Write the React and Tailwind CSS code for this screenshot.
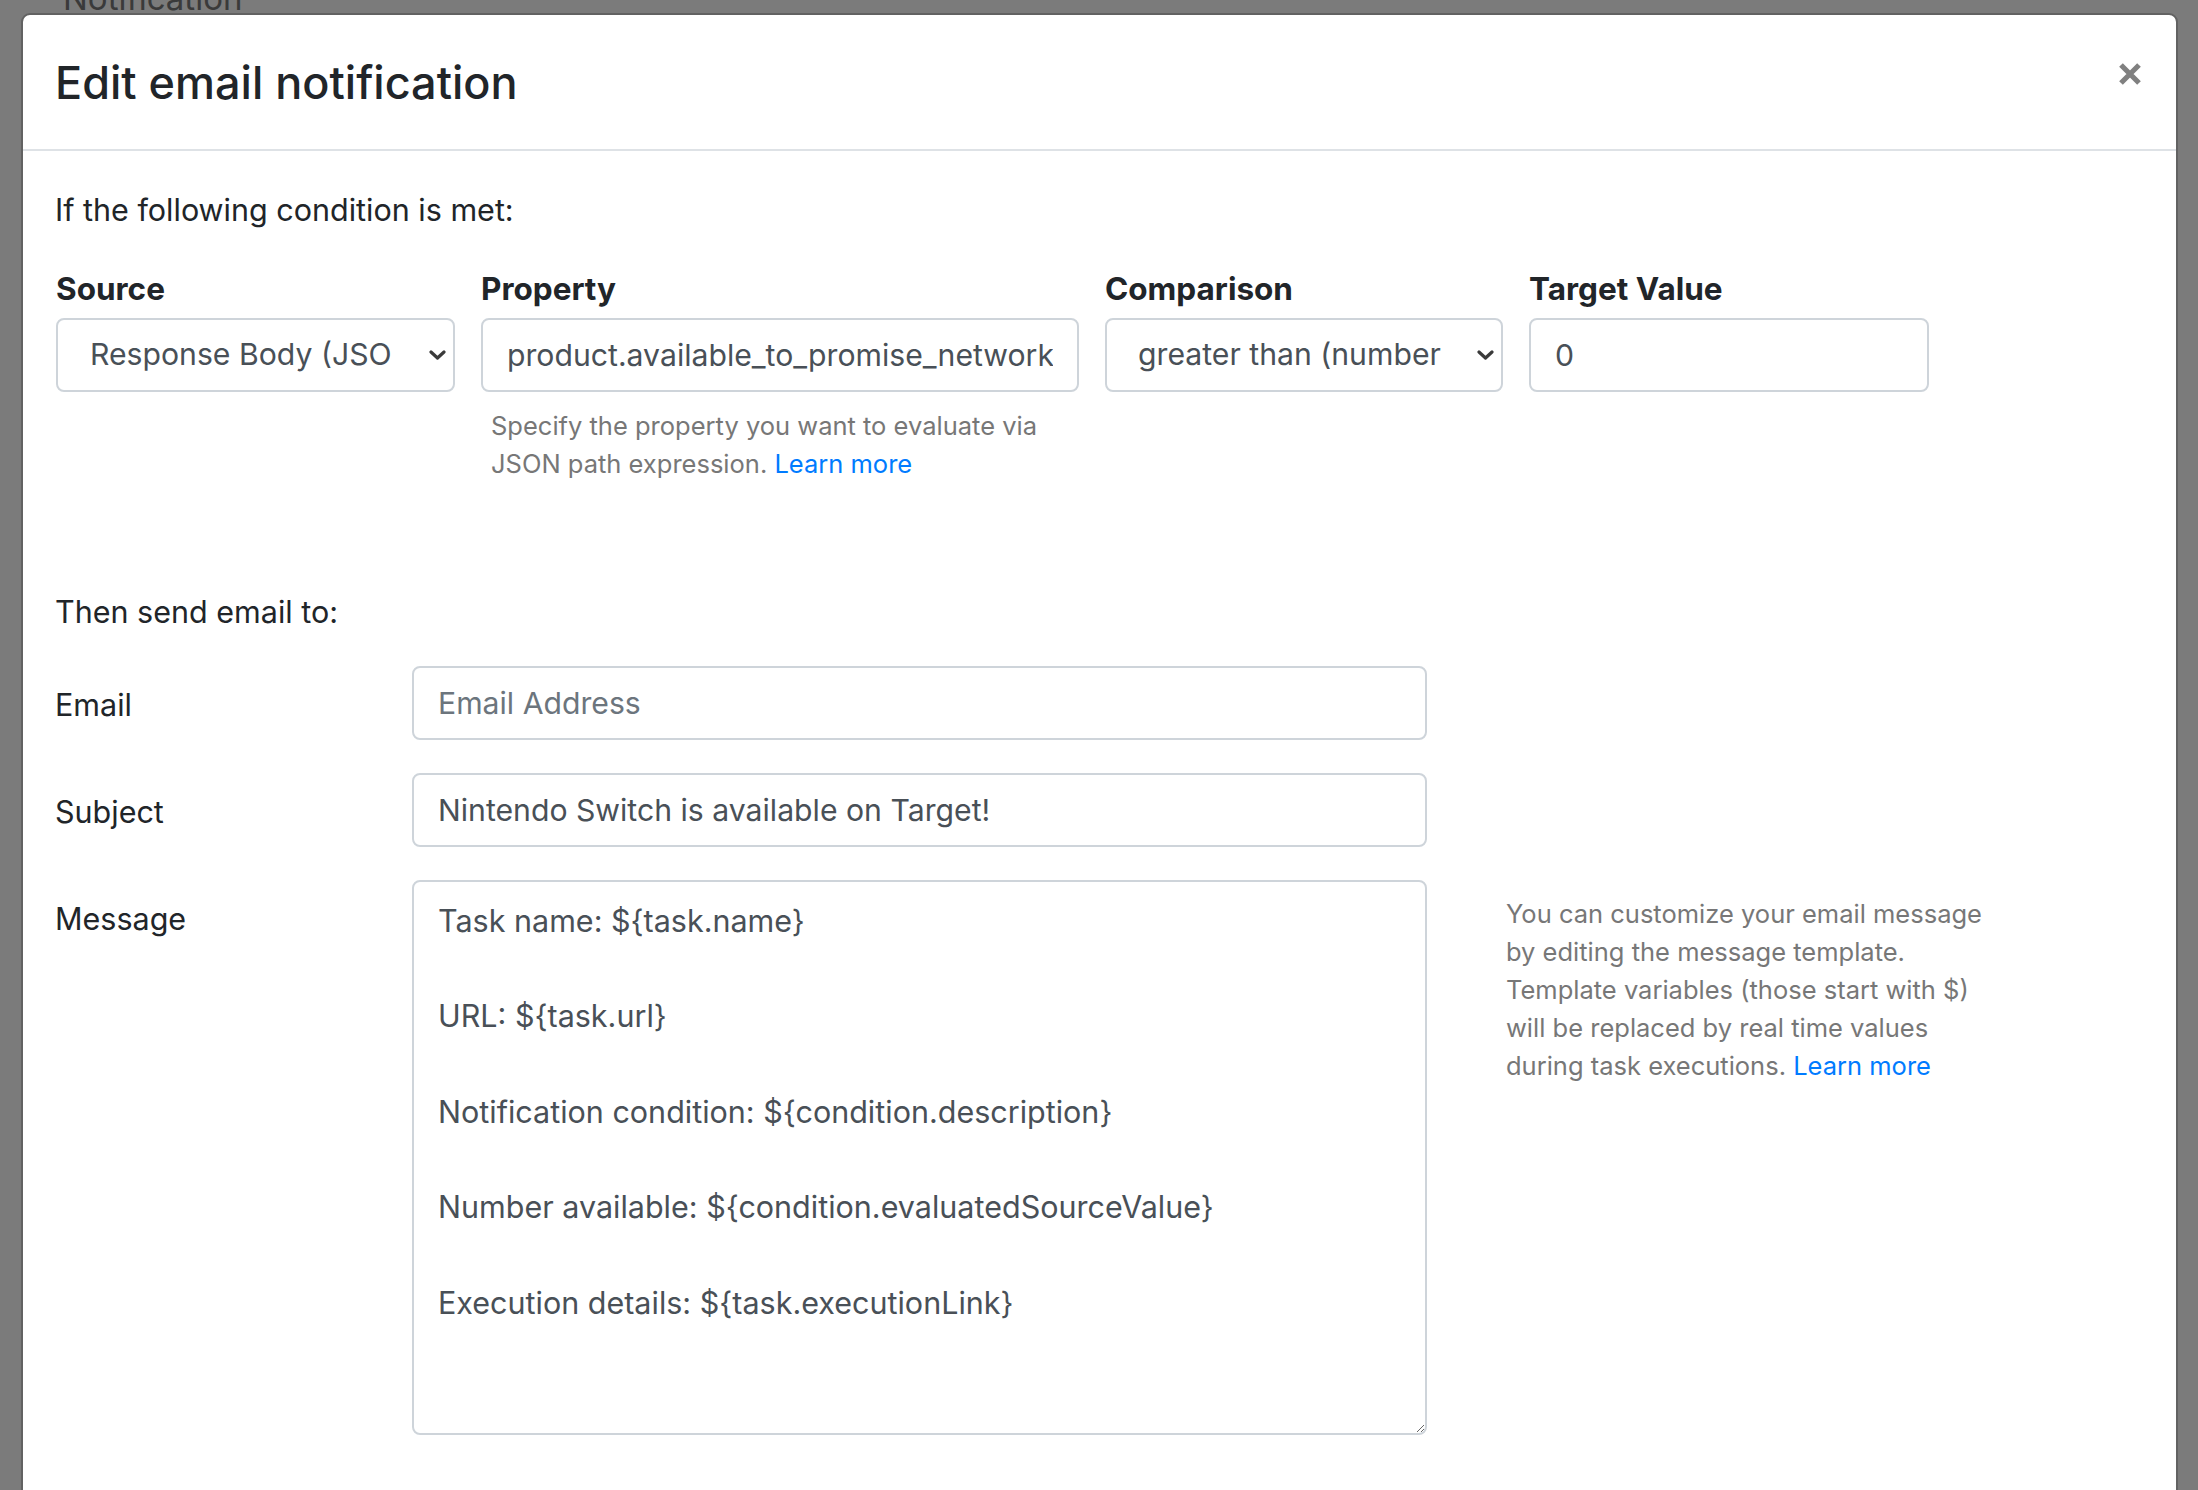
import React from "react";

function Chevron() {
  return (
    <svg width="17" height="10" viewBox="0 0 17 10" className="shrink-0">
      <path d="M2 2 L8.5 8 L15 2" fill="none" stroke="#3a3a3a" strokeWidth="3.2" strokeLinecap="round" strokeLinejoin="round" />
    </svg>
  );
}

function FakeSelect({ text, padLeft }) {
  return (
    <div className={`flex h-[74px] items-center rounded-[8px] border-2 border-[#ced4da] bg-white pr-[7px] ${padLeft}`}>
      <span className="whitespace-nowrap text-[30.2px] text-[#495057]">{text}</span>
      <span className="flex-1" />
      <Chevron />
    </div>
  );
}

export default function App() {
  const message =
    "Task name: ${task.name}\n\nURL: ${task.url}\n\nNotification condition: ${condition.description}\n\nNumber available: ${condition.evaluatedSourceValue}\n\nExecution details: ${task.executionLink}";
  return (
    <div className="h-[1490px] w-[2198px] overflow-hidden bg-[#7b7b7b] font-['Inter',sans-serif]">
      {/* page behind the backdrop */}
      <div className="h-[13px] overflow-hidden pl-[63px]">
        <div className="-mt-[22px] text-[33px] leading-[40px] text-[#3a3a3a]">Notification</div>
      </div>

      {/* modal */}
      <div className="ml-[21px] mr-[20px] h-[1600px] rounded-t-[9px] border-2 border-[#626262] bg-white">
        {/* header */}
        <div className="flex items-start justify-between border-b-2 border-[#dee2e6] px-[32px] pt-[32px] pb-[30px]">
          <h5 className="text-[45px] font-medium leading-[72px] text-[#212529]">Edit email notification</h5>
          <button className="mt-[15px] mr-[2px]" aria-label="Close">
            <svg width="24" height="24" viewBox="0 0 24 24">
              <path d="M3 3 L21 21 M21 3 L3 21" stroke="#808080" strokeWidth="5.2" strokeLinecap="butt" />
            </svg>
          </button>
        </div>

        {/* body */}
        <div className="px-[32px] pt-[35px] text-[#212529]">
          <p className="mb-[31px] text-[30.5px] leading-[48px]">If the following condition is met:</p>

          <div className="ml-[1px] flex items-start gap-[26px]">
            <div className="w-[399px]">
              <div className="mb-[5px] text-[31.5px] font-bold leading-[48px]">Source</div>
              <FakeSelect text="Response Body (JSO" padLeft="pl-[32px]" />
            </div>
            <div className="w-[598px]">
              <div className="mb-[5px] text-[31.5px] font-bold leading-[48px]">Property</div>
              <input
                className="h-[74px] w-full rounded-[8px] border-2 border-[#ced4da] bg-white px-[24px] text-[30.2px] text-[#495057] outline-none"
                defaultValue="product.available_to_promise_network.availability_status"
              />
              <div className="ml-[10px] mt-[15px] text-[25.5px] leading-[38px] text-[#777777]">
                Specify the property you want to evaluate via
                <br />
                JSON path expression. <span className="text-[#007bff]">Learn more</span>
              </div>
            </div>
            <div className="w-[398px]">
              <div className="mb-[5px] text-[31.5px] font-bold leading-[48px]">Comparison</div>
              <FakeSelect text="greater than (number" padLeft="pl-[31px]" />
            </div>
            <div className="w-[400px]">
              <div className="mb-[5px] text-[31.5px] font-bold leading-[48px]">Target Value</div>
              <input
                className="h-[74px] w-full rounded-[8px] border-2 border-[#ced4da] bg-white px-[24px] text-[30.2px] text-[#495057] outline-none"
                defaultValue="0"
              />
            </div>
          </div>

          <p className="mt-[105px] mb-[30px] text-[30.5px] leading-[48px]">Then send email to:</p>

          <div className="mb-[33px] flex items-start">
            <div className="w-[357px] pt-[15px] text-[30.5px] leading-[48px]">Email</div>
            <input
              className="h-[74px] w-[1015px] rounded-[8px] border-2 border-[#ced4da] bg-white px-[24px] text-[30.2px] text-[#495057] outline-none placeholder:text-[#6c757d]"
              placeholder="Email Address"
            />
          </div>

          <div className="mb-[33px] flex items-start">
            <div className="w-[357px] pt-[15px] text-[30.5px] leading-[48px]">Subject</div>
            <input
              className="h-[74px] w-[1015px] rounded-[8px] border-2 border-[#ced4da] bg-white px-[24px] text-[30.2px] text-[#495057] outline-none"
              defaultValue="Nintendo Switch is available on Target!"
            />
          </div>

          <div className="flex items-start">
            <div className="w-[357px] pt-[15px] text-[30.5px] leading-[48px]">Message</div>
            <textarea
              className="h-[555px] w-[1015px] rounded-[8px] border-2 border-[#ced4da] bg-white px-[24px] pt-[15px] text-[30.5px] leading-[47.7px] text-[#495057] outline-none"
              defaultValue={message}
            />
            <div className="ml-[79px] mt-[15px] text-[25.5px] leading-[38px] text-[#777777]">
              You can customize your email message
              <br />
              by editing the message template.
              <br />
              Template variables (those start with $)
              <br />
              will be replaced by real time values
              <br />
              during task executions. <span className="text-[#007bff]">Learn more</span>
            </div>
          </div>
        </div>
      </div>
    </div>
  );
}
